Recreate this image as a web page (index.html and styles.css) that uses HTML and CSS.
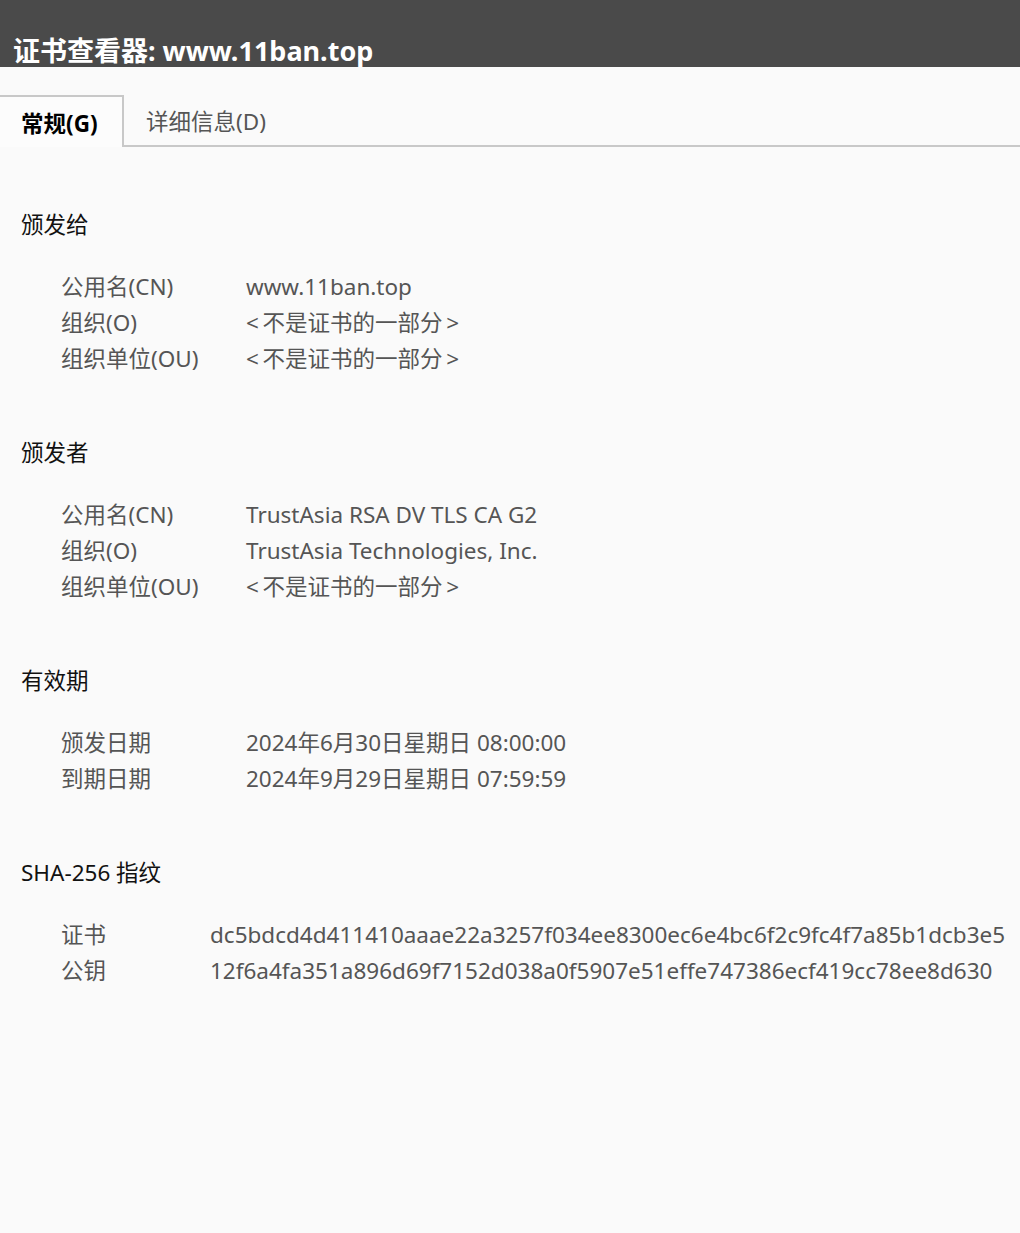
FILE: index.html
```html
<!DOCTYPE html>
<html lang="zh-CN">
<head>
    <meta charset="UTF-8">
    <title>证书查看器: www.11ban.top</title>
    <link rel="stylesheet" href="styles.css">
</head>
<body>
    <div class="titlebar">
        <span class="title">证书查看器: www.11ban.top</span>
    </div>

    <div class="tabs">
        <div class="tab active">常规(G)</div>
        <div class="tab">详细信息(D)</div>
        <div class="tab-rest"></div>
    </div>

    <div class="content">
        <div class="section">
            <div class="section-title">颁发给</div>
            <div class="rows">
                <div class="label">公用名(CN)</div><div class="value">www.11ban.top</div>
                <div class="label">组织(O)</div><div class="value">&lt;&thinsp;不是证书的一部分&thinsp;&gt;</div>
                <div class="label">组织单位(OU)</div><div class="value">&lt;&thinsp;不是证书的一部分&thinsp;&gt;</div>
            </div>
        </div>

        <div class="section">
            <div class="section-title">颁发者</div>
            <div class="rows">
                <div class="label">公用名(CN)</div><div class="value">TrustAsia RSA DV TLS CA G2</div>
                <div class="label">组织(O)</div><div class="value">TrustAsia Technologies, Inc.</div>
                <div class="label">组织单位(OU)</div><div class="value">&lt;&thinsp;不是证书的一部分&thinsp;&gt;</div>
            </div>
        </div>

        <div class="section">
            <div class="section-title">有效期</div>
            <div class="rows">
                <div class="label">颁发日期</div><div class="value">2024年6月30日星期日 08:00:00</div>
                <div class="label">到期日期</div><div class="value">2024年9月29日星期日 07:59:59</div>
            </div>
        </div>

        <div class="section">
            <div class="section-title">SHA-256 指纹</div>
            <div class="rows narrow">
                <div class="label">证书</div><div class="value">dc5bdcd4d411410aaae22a3257f034ee8300ec6e4bc6f2c9fc4f7a85b1dcb3e5</div>
                <div class="label">公钥</div><div class="value">12f6a4fa351a896d69f7152d038a0f5907e51effe747386ecf419cc78ee8d630</div>
            </div>
        </div>
    </div>
</body>
</html>
```

FILE: styles.css
```css
body {
    margin: 0;
    background: #fafafa;
    font-family: "Noto Sans", "Noto Sans CJK SC", sans-serif;
    font-size: 22.5px;
    min-height: 1233px;
}
.titlebar {
    background: #4a4a4a;
    height: 67px;
    overflow: hidden;
    padding-left: 13px;
    box-sizing: border-box;
}
.title {
    display: block;
    color: #fff;
    font-weight: bold;
    font-size: 27px;
    line-height: 30px;
    padding-top: 36px;
    white-space: nowrap;
}
.tabs {
    display: flex;
    margin-top: 28px;
    height: 52px;
}
.tab {
    padding: 2px 22px 0;
    line-height: 50px;
    color: #555;
    border-bottom: 2px solid #c8c8c8;
    box-sizing: border-box;
}
.tab.active {
    color: #000;
    font-weight: bold;
    background: #fcfcfc;
    border: 2px solid #c8c8c8;
    border-left: none;
    border-bottom: none;
    line-height: 50px;
    width: 124px;
    padding: 2px 0 0 21px;
}
.tab-rest {
    flex: 1;
    border-bottom: 2px solid #c8c8c8;
    box-sizing: border-box;
}
.content {
    padding: 60px 0 0 21px;
}
.section {
    margin-bottom: 58px;
}
.section-title {
    color: #111;
    line-height: 36px;
    margin-bottom: 26px;
}
.rows {
    display: grid;
    grid-template-columns: 185px 1fr;
    padding-left: 40px;
    line-height: 36px;
    color: #555;
}
.rows.narrow {
    grid-template-columns: 149px 1fr;
}
.value {
    white-space: nowrap;
}
```
